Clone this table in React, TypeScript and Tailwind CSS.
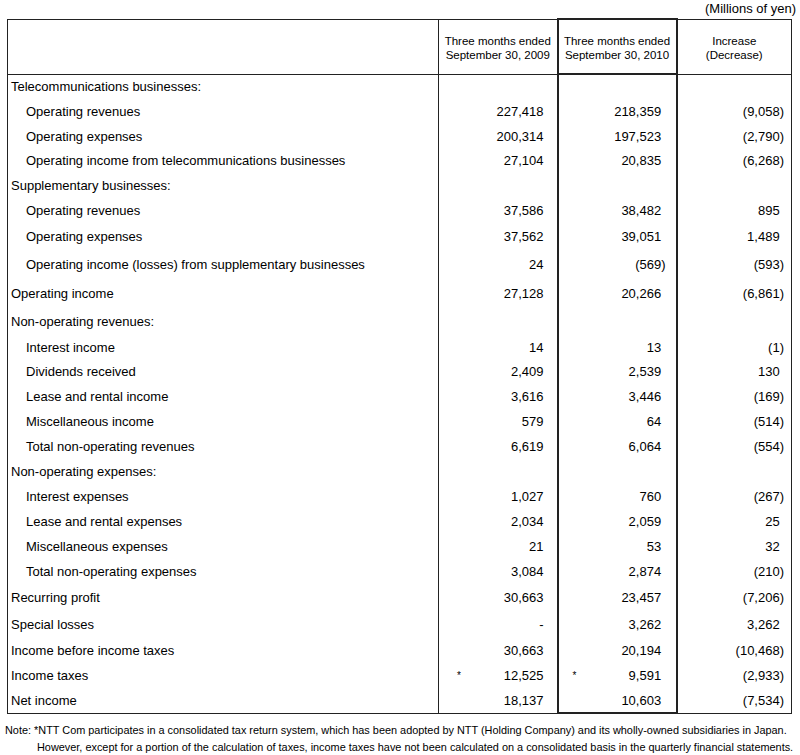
type Row = {
  label: string;
  indent?: boolean;
  a?: string;
  b?: string;
  c?: string;
  h: number;
  star?: boolean;
};

const rows: Row[] = [
  { label: "Telecommunications businesses:", h: 25 },
  { label: "Operating revenues", indent: true, a: "227,418", b: "218,359", c: "(9,058)", h: 25 },
  { label: "Operating expenses", indent: true, a: "200,314", b: "197,523", c: "(2,790)", h: 24 },
  { label: "Operating income from telecommunications businesses", indent: true, a: "27,104", b: "20,835", c: "(6,268)", h: 25 },
  { label: "Supplementary businesses:", h: 25 },
  { label: "Operating revenues", indent: true, a: "37,586", b: "38,482", c: "895", h: 25 },
  { label: "Operating expenses", indent: true, a: "37,562", b: "39,051", c: "1,489", h: 27 },
  { label: "Operating income (losses) from supplementary businesses", indent: true, a: "24", b: "(569)", c: "(593)", h: 29 },
  { label: "Operating income", a: "27,128", b: "20,266", c: "(6,861)", h: 29 },
  { label: "Non-operating revenues:", h: 27 },
  { label: "Interest income", indent: true, a: "14", b: "13", c: "(1)", h: 24 },
  { label: "Dividends received", indent: true, a: "2,409", b: "2,539", c: "130", h: 25 },
  { label: "Lease and rental income", indent: true, a: "3,616", b: "3,446", c: "(169)", h: 25 },
  { label: "Miscellaneous income", indent: true, a: "579", b: "64", c: "(514)", h: 25 },
  { label: "Total non-operating revenues", indent: true, a: "6,619", b: "6,064", c: "(554)", h: 25 },
  { label: "Non-operating expenses:", h: 25 },
  { label: "Interest expenses", indent: true, a: "1,027", b: "760", c: "(267)", h: 25 },
  { label: "Lease and rental expenses", indent: true, a: "2,034", b: "2,059", c: "25", h: 25 },
  { label: "Miscellaneous expenses", indent: true, a: "21", b: "53", c: "32", h: 25 },
  { label: "Total non-operating expenses", indent: true, a: "3,084", b: "2,874", c: "(210)", h: 25 },
  { label: "Recurring profit", a: "30,663", b: "23,457", c: "(7,206)", h: 27 },
  { label: "Special losses", a: "-", b: "3,262", c: "3,262", h: 27 },
  { label: "Income before income taxes", a: "30,663", b: "20,194", c: "(10,468)", h: 25 },
  { label: "Income taxes", a: "12,525", b: "9,591", c: "(2,933)", h: 25, star: true },
  { label: "Net income", a: "18,137", b: "10,603", c: "(7,534)", h: 25 },
];

// keeps positive figures lined up with the digits of bracketed ones
function Num({ v }: { v?: string }) {
  if (!v) return null;
  const paren = v.endsWith(")");
  return (
    <span>
      {v}
      {!paren && <span className="invisible">)</span>}
    </span>
  );
}

export default function App() {
  const last = rows.length - 1;
  return (
    <div
      className="w-[800px] h-[755px] bg-white text-black"
      style={{ fontFamily: '"Liberation Sans", Arial, sans-serif' }}
    >
      <div className="h-[18px] pr-[4px] text-right text-[13px] leading-[18px]">(Millions of yen)</div>

      <table className="ml-[7px] w-[784px] table-fixed border-collapse text-[13px]">
        <colgroup>
          <col className="w-[431px]" />
          <col className="w-[119px]" />
          <col className="w-[119px]" />
          <col className="w-[115px]" />
        </colgroup>
        <thead>
          <tr className="h-[55px] text-[11.5px] leading-[14px]">
            <th className="border border-[#222] font-normal"></th>
            <th className="border border-[#222] font-normal text-center pt-[3px]">
              Three months ended
              <br />
              September 30, 2009
            </th>
            <th className="border-2 border-[#222] font-normal text-center pt-[3px]">
              Three months ended
              <br />
              September 30, 2010
            </th>
            <th className="border border-[#222] font-normal text-center pt-[3px]">
              Increase
              <br />
              (Decrease)
            </th>
          </tr>
        </thead>
        <tbody>
          {rows.map((r, i) => (
            <tr key={i} style={{ height: r.h }} className="leading-[15px]">
              <td
                className={`border-l border-r border-[#222] ${i === last ? "border-b" : ""} ${
                  r.indent ? "pl-[18px]" : "pl-[3px]"
                } whitespace-nowrap`}
              >
                {r.label}
              </td>
              <td className={`border-r border-[#222] ${i === last ? "border-b" : ""} pl-[18px] pr-[13px]`}>
                <div className="flex items-center justify-between">
                  <span className="text-[10px]">{r.star ? "*" : ""}</span>
                  <span>{r.a}</span>
                </div>
              </td>
              <td
                className={`border-x-2 border-[#222] ${i === last ? "border-b-2" : ""} pl-[14px] pr-[10px]`}
              >
                <div className="flex items-center justify-between">
                  <span className="text-[10px]">{r.star ? "*" : ""}</span>
                  <Num v={r.b} />
                </div>
              </td>
              <td className={`border-r border-[#222] ${i === last ? "border-b" : ""} pr-[7px] text-right`}>
                <Num v={r.c} />
              </td>
            </tr>
          ))}
        </tbody>
      </table>

      <div className="mt-[8px] text-[10.9px] leading-[17px]">
        <p className="pl-[5px] whitespace-nowrap">
          Note: *NTT Com participates in a consolidated tax return system, which has been adopted by NTT (Holding
          Company) and its wholly-owned subsidiaries in Japan.
        </p>
        <p className="pl-[37px] whitespace-nowrap">
          However, except for a portion of the calculation of taxes, income taxes have not been calculated on a
          consolidated basis in the quarterly financial statements.
        </p>
      </div>
    </div>
  );
}
